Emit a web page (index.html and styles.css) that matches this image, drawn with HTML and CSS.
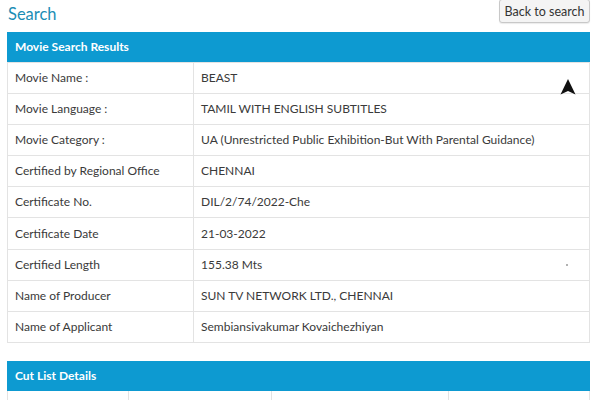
FILE: index.html
```html
<!DOCTYPE html>
<html>
<head>
<meta charset="utf-8">
<link rel="stylesheet" href="styles.css">
</head>
<body>
<div class="page">
  <div class="topbar">
    <h1 class="title">Search</h1>
    <button class="back">Back to search</button>
  </div>
  <div class="panel results">
    <div class="panel-head">Movie Search Results</div>
    <table class="info">
      <tr><td class="lbl">Movie Name :</td><td>BEAST</td></tr>
      <tr><td class="lbl">Movie Language :</td><td>TAMIL WITH ENGLISH SUBTITLES</td></tr>
      <tr><td class="lbl">Movie Category :</td><td>UA (Unrestricted Public Exhibition-But With Parental Guidance)</td></tr>
      <tr><td class="lbl">Certified by Regional Office</td><td>CHENNAI</td></tr>
      <tr><td class="lbl">Certificate No.</td><td>DIL/2/74/2022-Che</td></tr>
      <tr><td class="lbl">Certificate Date</td><td>21-03-2022</td></tr>
      <tr><td class="lbl">Certified Length</td><td>155.38 Mts</td></tr>
      <tr><td class="lbl">Name of Producer</td><td>SUN TV NETWORK LTD., CHENNAI</td></tr>
      <tr><td class="lbl">Name of Applicant</td><td>Sembiansivakumar Kovaichezhiyan</td></tr>
    </table>
    <svg class="nav-arrow" width="16" height="16" viewBox="0 0 16 16"><path d="M8 0 L15.5 15.5 L8 12 L0.5 15.5 Z" fill="#111"/></svg>
    <span class="dot"></span>
  </div>
  <div class="panel cuts">
    <div class="panel-head">Cut List Details</div>
    <div class="cut-row">
      <div class="c1"></div><div class="c2"></div><div class="c3"></div><div class="c4"></div>
    </div>
  </div>
</div>
</body>
</html>
```
FILE: styles.css
```css
html, body { margin: 0; padding: 0; background: #fff; }
body { font-family: "Lato", "Open Sans", sans-serif; color: #3a3a3a; overflow: hidden; height: 400px; }
.page { padding: 0 10px 0 7px; }
.topbar { display: flex; justify-content: space-between; align-items: flex-start; height: 32px; }
.title { margin: 4px 0 0 1px; font-size: 16.5px; font-weight: 400; color: #1b8db5; line-height: 20px; }
.back {
  margin-top: -1px; height: 24px; width: 91px; padding: 0;
  font-family: "Lato", "Open Sans", sans-serif; font-size: 12.5px; color: #333;
  background: #f4f4f4; border: 1px solid #c8c8c8; border-radius: 3px;
  box-shadow: 0 1px 1px rgba(0,0,0,0.08);
}
.panel { position: relative; }
.panel-head {
  background: #0d9ad1; color: #fff; height: 30px; line-height: 30px;
  padding-left: 8px; font-size: 12px; font-weight: 700;
}
.info { width: 100%; border-collapse: collapse; font-size: 12px; }
.info td { height: 30.1px; padding: 0 0 0 7px; border: 1px solid #e3e3e3; line-height: 30px; }
.info td.lbl { width: 178px; }
.nav-arrow { position: absolute; left: 553px; top: 47px; }
.dot { position: absolute; left: 559px; top: 232px; width: 2px; height: 2px; background: #999; border-radius: 1px; }
.cuts { margin-top: 18px; }
.cut-row { display: grid; grid-template-columns: 121px 143px 177px 1fr; height: 20px; border-left: 1px solid #e3e3e3; border-right: 1px solid #e3e3e3; }
.cut-row > div { border-right: 1px solid #e3e3e3; }
.cut-row > div:last-child { border-right: none; }
```
